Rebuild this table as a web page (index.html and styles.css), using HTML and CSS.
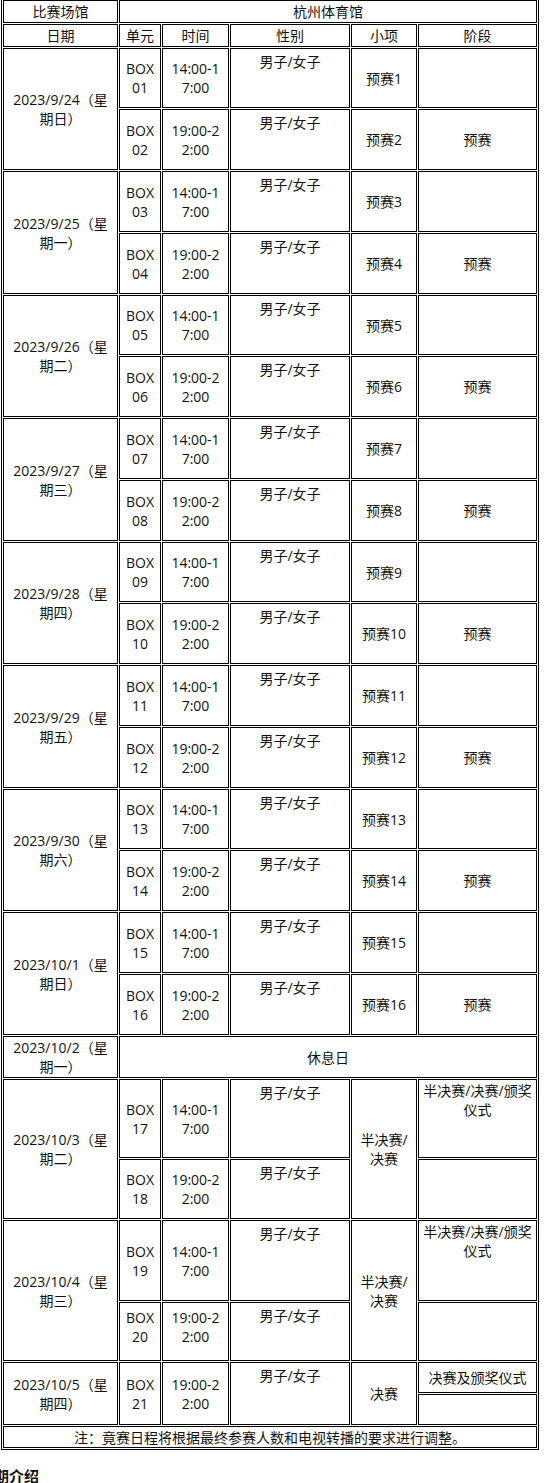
FILE: index.html
```html
<!DOCTYPE html>
<html lang="zh-CN">
<head>
<meta charset="utf-8">
<title>杭州体育馆 赛程</title>
<link rel="stylesheet" href="styles.css">
</head>
<body>
<div class="page">
<table class="schedule">
  <colgroup>
    <col class="c-date"><col class="c-unit"><col class="c-time"><col class="c-sex"><col class="c-item"><col class="c-stage">
  </colgroup>
  <tr class="h23"><td>比赛场馆</td><td colspan="5">杭州体育馆</td></tr>
  <tr class="h23"><td>日期</td><td>单元</td><td>时间</td><td>性别</td><td>小项</td><td>阶段</td></tr>

  <tr class="h60"><td rowspan="2">2023/9/24（星<br>期日）</td><td>BOX<br>01</td><td>14:00-1<br>7:00</td><td class="top">男子/女子</td><td>预赛1</td><td></td></tr>
  <tr class="h61"><td>BOX<br>02</td><td>19:00-2<br>2:00</td><td class="top">男子/女子</td><td>预赛2</td><td>预赛</td></tr>

  <tr class="h61"><td rowspan="2">2023/9/25（星<br>期一）</td><td>BOX<br>03</td><td>14:00-1<br>7:00</td><td class="top">男子/女子</td><td>预赛3</td><td></td></tr>
  <tr class="h61"><td>BOX<br>04</td><td>19:00-2<br>2:00</td><td class="top">男子/女子</td><td>预赛4</td><td>预赛</td></tr>

  <tr class="h60"><td rowspan="2">2023/9/26（星<br>期二）</td><td>BOX<br>05</td><td>14:00-1<br>7:00</td><td class="top">男子/女子</td><td>预赛5</td><td></td></tr>
  <tr class="h61"><td>BOX<br>06</td><td>19:00-2<br>2:00</td><td class="top">男子/女子</td><td>预赛6</td><td>预赛</td></tr>

  <tr class="h61"><td rowspan="2">2023/9/27（星<br>期三）</td><td>BOX<br>07</td><td>14:00-1<br>7:00</td><td class="top">男子/女子</td><td>预赛7</td><td></td></tr>
  <tr class="h61"><td>BOX<br>08</td><td>19:00-2<br>2:00</td><td class="top">男子/女子</td><td>预赛8</td><td>预赛</td></tr>

  <tr class="h60"><td rowspan="2">2023/9/28（星<br>期四）</td><td>BOX<br>09</td><td>14:00-1<br>7:00</td><td class="top">男子/女子</td><td>预赛9</td><td></td></tr>
  <tr class="h61"><td>BOX<br>10</td><td>19:00-2<br>2:00</td><td class="top">男子/女子</td><td>预赛10</td><td>预赛</td></tr>

  <tr class="h61"><td rowspan="2">2023/9/29（星<br>期五）</td><td>BOX<br>11</td><td>14:00-1<br>7:00</td><td class="top">男子/女子</td><td>预赛11</td><td></td></tr>
  <tr class="h61"><td>BOX<br>12</td><td>19:00-2<br>2:00</td><td class="top">男子/女子</td><td>预赛12</td><td>预赛</td></tr>

  <tr class="h60"><td rowspan="2">2023/9/30（星<br>期六）</td><td>BOX<br>13</td><td>14:00-1<br>7:00</td><td class="top">男子/女子</td><td>预赛13</td><td></td></tr>
  <tr class="h61"><td>BOX<br>14</td><td>19:00-2<br>2:00</td><td class="top">男子/女子</td><td>预赛14</td><td>预赛</td></tr>

  <tr class="h61"><td rowspan="2">2023/10/1（星<br>期日）</td><td>BOX<br>15</td><td>14:00-1<br>7:00</td><td class="top">男子/女子</td><td>预赛15</td><td></td></tr>
  <tr class="h61"><td>BOX<br>16</td><td>19:00-2<br>2:00</td><td class="top">男子/女子</td><td>预赛16</td><td>预赛</td></tr>

  <tr class="h42"><td>2023/10/2（星<br>期一）</td><td colspan="5">休息日</td></tr>

  <tr class="h79"><td rowspan="2">2023/10/3（星<br>期二）</td><td>BOX<br>17</td><td>14:00-1<br>7:00</td><td class="top">男子/女子</td><td rowspan="2">半决赛/<br>决赛</td><td class="top flush">半决赛/决赛/颁奖<br>仪式</td></tr>
  <tr class="h60"><td>BOX<br>18</td><td>19:00-2<br>2:00</td><td class="top">男子/女子</td><td></td></tr>

  <tr class="h81"><td rowspan="2">2023/10/4（星<br>期三）</td><td>BOX<br>19</td><td>14:00-1<br>7:00</td><td class="top">男子/女子</td><td rowspan="2">半决赛/<br>决赛</td><td class="top flush">半决赛/决赛/颁奖<br>仪式</td></tr>
  <tr class="h59"><td class="raise">BOX<br>20</td><td class="raise">19:00-2<br>2:00</td><td class="top">男子/女子</td><td></td></tr>

  <tr class="h31"><td rowspan="2">2023/10/5（星<br>期四）</td><td rowspan="2">BOX<br>21</td><td rowspan="2">19:00-2<br>2:00</td><td rowspan="2" class="top">男子/女子</td><td rowspan="2">决赛</td><td>决赛及颁奖仪式</td></tr>
  <tr class="h31"><td></td></tr>

  <tr class="h22"><td colspan="6">注：竟赛日程将根据最终参赛人数和电视转播的要求进行调整。</td></tr>
</table>
<h4 class="section-title">赛期介绍</h4>
</div>
</body>
</html>
```

FILE: styles.css
```css
html, body {
  margin: 0;
  padding: 0;
  background: #fff;
}

body {
  font-family: "Open Sans", "Noto Sans CJK SC", sans-serif;
  font-size: 14px;
  color: #111;
  overflow: hidden;
}

.page {
  padding-left: 1px;
  margin-top: -2px;
}

.schedule {
  table-layout: fixed;
  width: 538px;
  border: 1px solid #000;
  border-collapse: separate;
  border-spacing: 1px;
  font-size: 14px;
  line-height: 19px;
}

.c-date { width: 115px; }
.c-unit { width: 42px; }
.c-time { width: 67px; }
.c-sex { width: 120px; }
.c-item { width: 66px; }
.c-stage { width: 119px; }

.schedule td {
  border: 1px solid #000;
  padding: 0 1px;
  text-align: center;
  vertical-align: middle;
  white-space: nowrap;
  overflow: hidden;
  font-family: "Open Sans", "Noto Sans CJK SC", sans-serif;
}

.schedule td.top {
  vertical-align: top;
  padding-top: 3px;
}

.schedule td.top.flush {
  padding-top: 1px;
}

.schedule td.raise {
  padding-bottom: 10px;
}

.h22 { height: 22px; }
.h23 { height: 23px; }
.h31 { height: 31px; }
.h42 { height: 42px; }
.h59 { height: 59px; }
.h60 { height: 60px; }
.h61 { height: 61px; }
.h79 { height: 79px; }
.h81 { height: 81px; }

.section-title {
  font-family: "Noto Sans CJK SC", sans-serif;
  font-size: 15px;
  font-weight: bold;
  line-height: 20px;
  color: #111;
  margin: 16px 0 0 -22px;
}
```
